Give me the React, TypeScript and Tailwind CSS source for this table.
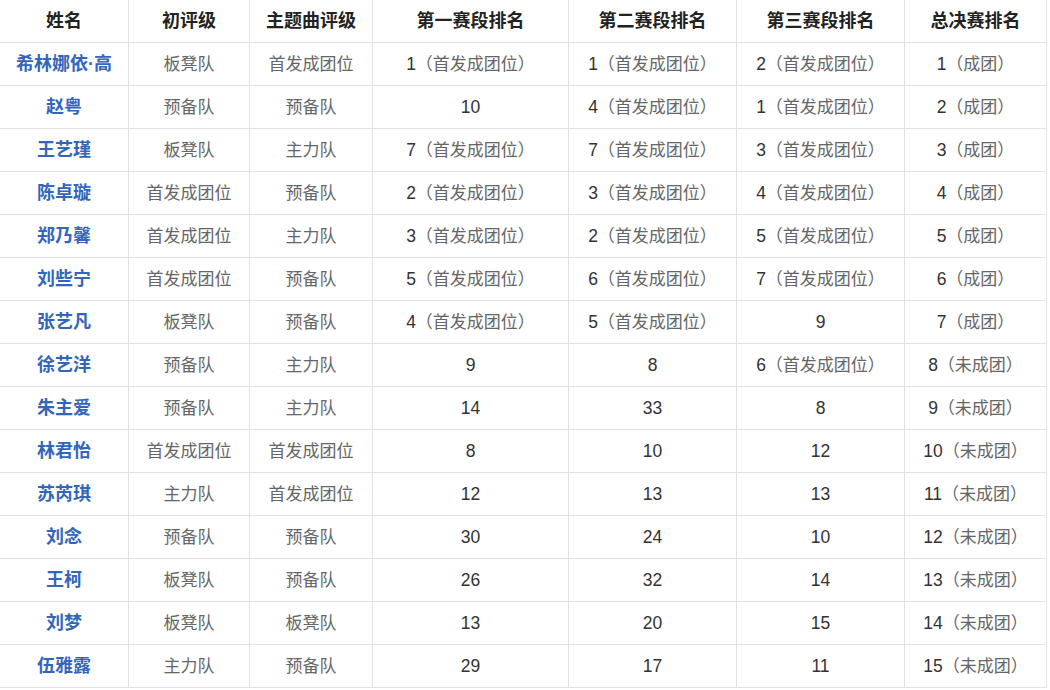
const headers = ['姓名', '初评级', '主题曲评级', '第一赛段排名', '第二赛段排名', '第三赛段排名', '总决赛排名'];

const rows: string[][] = [
  ['希林娜依·高', '板凳队', '首发成团位', '1（首发成团位）', '1（首发成团位）', '2（首发成团位）', '1（成团）'],
  ['赵粤', '预备队', '预备队', '10', '4（首发成团位）', '1（首发成团位）', '2（成团）'],
  ['王艺瑾', '板凳队', '主力队', '7（首发成团位）', '7（首发成团位）', '3（首发成团位）', '3（成团）'],
  ['陈卓璇', '首发成团位', '预备队', '2（首发成团位）', '3（首发成团位）', '4（首发成团位）', '4（成团）'],
  ['郑乃馨', '首发成团位', '主力队', '3（首发成团位）', '2（首发成团位）', '5（首发成团位）', '5（成团）'],
  ['刘些宁', '首发成团位', '预备队', '5（首发成团位）', '6（首发成团位）', '7（首发成团位）', '6（成团）'],
  ['张艺凡', '板凳队', '预备队', '4（首发成团位）', '5（首发成团位）', '9', '7（成团）'],
  ['徐艺洋', '预备队', '主力队', '9', '8', '6（首发成团位）', '8（未成团）'],
  ['朱主爱', '预备队', '主力队', '14', '33', '8', '9（未成团）'],
  ['林君怡', '首发成团位', '首发成团位', '8', '10', '12', '10（未成团）'],
  ['苏芮琪', '主力队', '首发成团位', '12', '13', '13', '11（未成团）'],
  ['刘念', '预备队', '预备队', '30', '24', '10', '12（未成团）'],
  ['王柯', '板凳队', '预备队', '26', '32', '14', '13（未成团）'],
  ['刘梦', '板凳队', '板凳队', '13', '20', '15', '14（未成团）'],
  ['伍雅露', '主力队', '预备队', '29', '17', '11', '15（未成团）'],
];

const cell = 'h-[43px] pt-px flex items-center justify-center border-r border-b border-[#e2e2e2] whitespace-nowrap';

// split leading number from the chinese part so they can be tinted separately
function Rank({ value }: { value: string }) {
  const m = value.match(/^(\d*)(.*)$/);
  const num = m ? m[1] : '';
  const rest = m ? m[2] : value;
  return (
    <span>
      {num && <span className="text-[#333] text-[17.5px]">{num}</span>}
      {rest && <span className="text-[#666]">{rest}</span>}
    </span>
  );
}

export default function App() {
  return (
    <div
      className="w-[1050px] h-[690px] overflow-hidden bg-white text-[17px]"
      style={{ fontFamily: '"Liberation Sans", "Noto Sans CJK SC", sans-serif' }}
    >
      <div className="grid grid-cols-[129px_121px_123px_196px_168px_168px_142px]">
        {headers.map((h) => (
          <div key={h} className={`${cell} font-bold text-[18px] text-[#222]`}>
            {h}
          </div>
        ))}
        {rows.map((r) => (
          <div key={r[0]} className="contents">
            <div className={`${cell} font-bold text-[18px] text-[#3366bb]`}>{r[0]}</div>
            <div className={`${cell} text-[#666]`}>{r[1]}</div>
            <div className={`${cell} text-[#666]`}>{r[2]}</div>
            {r.slice(3).map((v, i) => (
              <div key={i} className={cell}>
                <Rank value={v} />
              </div>
            ))}
          </div>
        ))}
      </div>
    </div>
  );
}
